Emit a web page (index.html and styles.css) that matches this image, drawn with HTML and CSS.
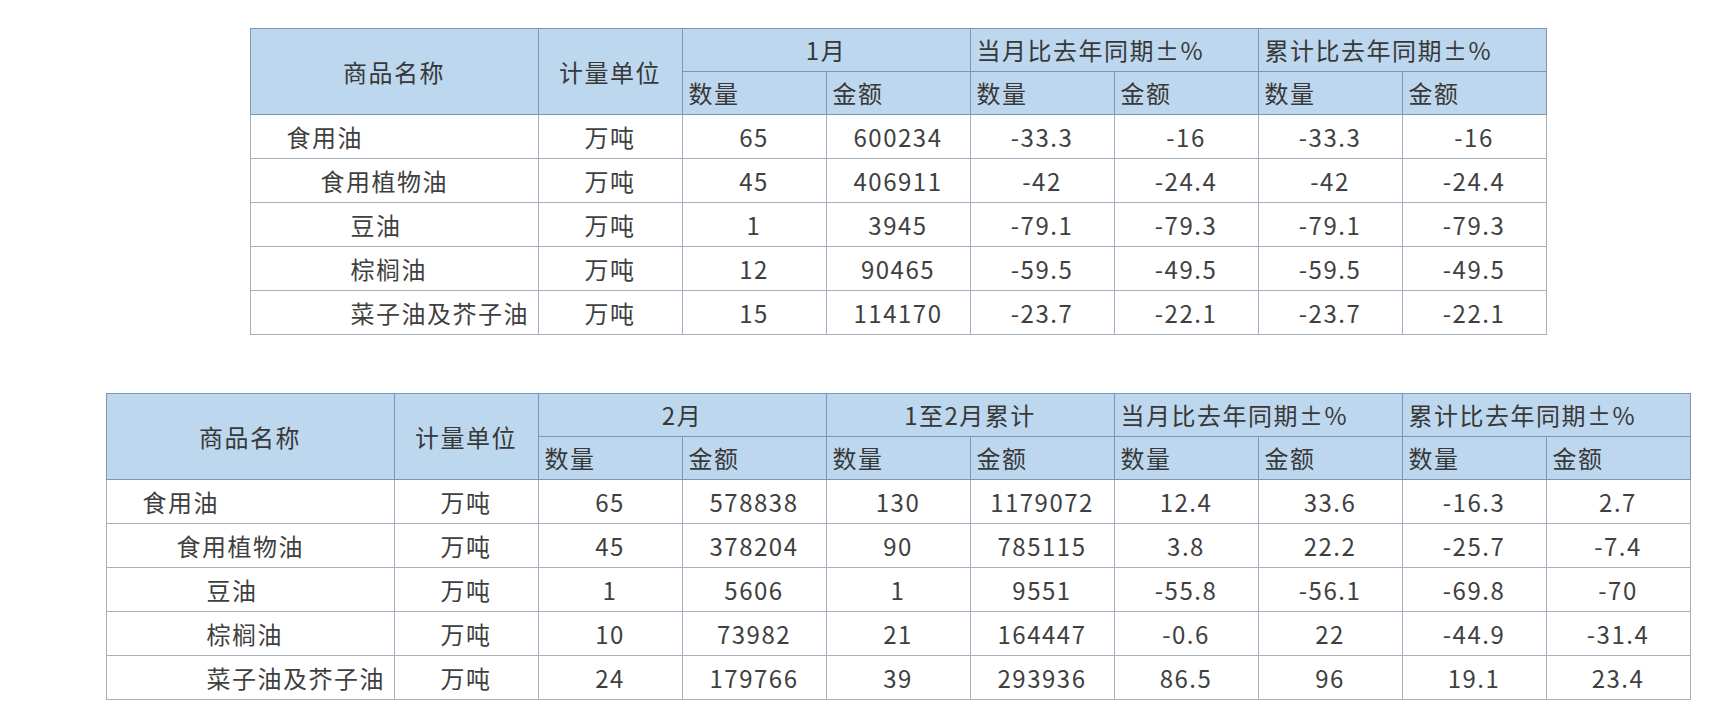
FILE: index.html
```html
<!DOCTYPE html>
<html lang="zh-CN">
<head>
<meta charset="utf-8">
<title>食用油进口</title>
<link rel="stylesheet" href="styles.css">
</head>
<body>
<div class="page">
  <table class="grid">
    <colgroup>
      <col class="c-name"><col class="c-num"><col class="c-num"><col class="c-num"><col class="c-num"><col class="c-num"><col class="c-num"><col class="c-num">
    </colgroup>
    <thead>
      <tr class="hr">
        <th rowspan="2" class="center">商品名称</th>
        <th rowspan="2" class="center">计量单位</th>
        <th colspan="2" class="center">1月</th>
        <th colspan="2">当月比去年同期±%</th>
        <th colspan="2">累计比去年同期±%</th>
      </tr>
      <tr class="hr">
        <th>数量</th><th>金额</th><th>数量</th><th>金额</th><th>数量</th><th>金额</th>
      </tr>
    </thead>
    <tbody>
      <tr><td class="name l0">食用油</td><td>万吨</td><td>65</td><td>600234</td><td>-33.3</td><td>-16</td><td>-33.3</td><td>-16</td></tr>
      <tr><td class="name l1">食用植物油</td><td>万吨</td><td>45</td><td>406911</td><td>-42</td><td>-24.4</td><td>-42</td><td>-24.4</td></tr>
      <tr><td class="name l2">豆油</td><td>万吨</td><td>1</td><td>3945</td><td>-79.1</td><td>-79.3</td><td>-79.1</td><td>-79.3</td></tr>
      <tr><td class="name l2">棕榈油</td><td>万吨</td><td>12</td><td>90465</td><td>-59.5</td><td>-49.5</td><td>-59.5</td><td>-49.5</td></tr>
      <tr><td class="name l2">菜子油及芥子油</td><td>万吨</td><td>15</td><td>114170</td><td>-23.7</td><td>-22.1</td><td>-23.7</td><td>-22.1</td></tr>
    </tbody>
  </table>

  <table class="grid">
    <colgroup>
      <col class="c-name"><col class="c-num"><col class="c-num"><col class="c-num"><col class="c-num"><col class="c-num"><col class="c-num"><col class="c-num"><col class="c-num"><col class="c-num">
    </colgroup>
    <thead>
      <tr class="hr">
        <th rowspan="2" class="center">商品名称</th>
        <th rowspan="2" class="center">计量单位</th>
        <th colspan="2" class="center">2月</th>
        <th colspan="2" class="center">1至2月累计</th>
        <th colspan="2">当月比去年同期±%</th>
        <th colspan="2">累计比去年同期±%</th>
      </tr>
      <tr class="hr">
        <th>数量</th><th>金额</th><th>数量</th><th>金额</th><th>数量</th><th>金额</th><th>数量</th><th>金额</th>
      </tr>
    </thead>
    <tbody>
      <tr><td class="name l0">食用油</td><td>万吨</td><td>65</td><td>578838</td><td>130</td><td>1179072</td><td>12.4</td><td>33.6</td><td>-16.3</td><td>2.7</td></tr>
      <tr><td class="name l1">食用植物油</td><td>万吨</td><td>45</td><td>378204</td><td>90</td><td>785115</td><td>3.8</td><td>22.2</td><td>-25.7</td><td>-7.4</td></tr>
      <tr><td class="name l2">豆油</td><td>万吨</td><td>1</td><td>5606</td><td>1</td><td>9551</td><td>-55.8</td><td>-56.1</td><td>-69.8</td><td>-70</td></tr>
      <tr><td class="name l2">棕榈油</td><td>万吨</td><td>10</td><td>73982</td><td>21</td><td>164447</td><td>-0.6</td><td>22</td><td>-44.9</td><td>-31.4</td></tr>
      <tr><td class="name l2">菜子油及芥子油</td><td>万吨</td><td>24</td><td>179766</td><td>39</td><td>293936</td><td>86.5</td><td>96</td><td>19.1</td><td>23.4</td></tr>
    </tbody>
  </table>
</div>
</body>
</html>
```

FILE: styles.css
```css
html, body {
  margin: 0;
  background: #ffffff;
}

body {
  font-family: "Noto Sans CJK SC", "Noto Sans", sans-serif;
  color: #3f3f3f;
}

.page {
  display: flex;
  flex-direction: column;
  align-items: center;
  gap: 58px;
  padding: 28px 0 0 61px;
}

.grid {
  border-collapse: collapse;
  table-layout: fixed;
  font-size: 24px;
  letter-spacing: 1.5px;
  border: 1px solid #8797a8;
}

.c-name { width: 288px; }
.c-num { width: 144px; }

.grid th,
.grid td {
  border: 1px solid #a3afbb;
  padding: 0 6px;
  line-height: 1;
  white-space: nowrap;
  overflow: hidden;
}

.grid th {
  background: #bdd7ee;
  color: #383838;
  font-weight: normal;
  text-align: left;
  height: 42px;
  border-color: #7e97b0;
}

.grid th.center {
  text-align: center;
}

.grid td {
  height: 43px;
  text-align: center;
  background: #ffffff;
}

.grid td.name {
  text-align: left;
  padding-right: 0;
}

.grid td.l0 { padding-left: 36px; }
.grid td.l1 { padding-left: 70px; }
.grid td.l2 { padding-left: 100px; }
```
